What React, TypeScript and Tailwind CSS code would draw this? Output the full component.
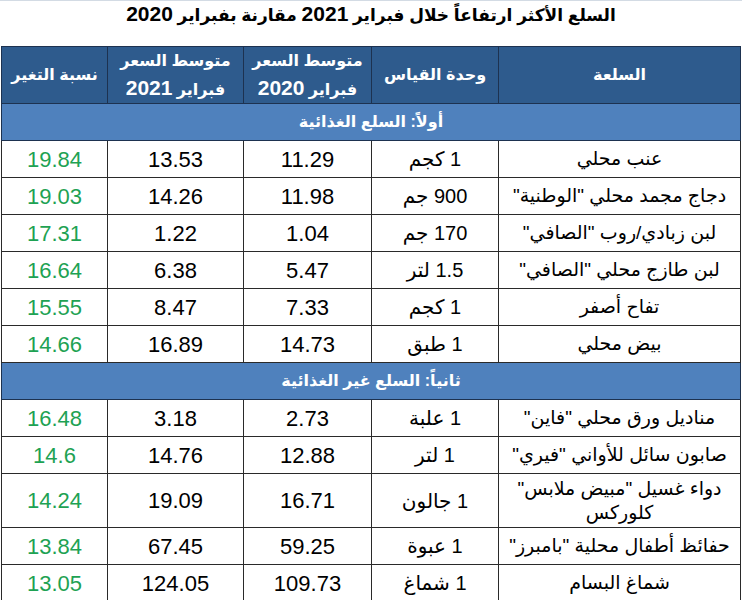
import React from 'react';

type Row = {
  name: string;
  unit: string;
  p2020: string;
  p2021: string;
  change: string;
  tall?: boolean;
};

const food: Row[] = [
  { name: 'عنب محلي', unit: '1 كجم', p2020: '11.29', p2021: '13.53', change: '19.84' },
  { name: 'دجاج مجمد محلي "الوطنية"', unit: '900 جم', p2020: '11.98', p2021: '14.26', change: '19.03' },
  { name: 'لبن زبادي/روب "الصافي"', unit: '170 جم', p2020: '1.04', p2021: '1.22', change: '17.31' },
  { name: 'لبن طازج محلي "الصافي"', unit: '1.5 لتر', p2020: '5.47', p2021: '6.38', change: '16.64' },
  { name: 'تفاح أصفر', unit: '1 كجم', p2020: '7.33', p2021: '8.47', change: '15.55' },
  { name: 'بيض محلي', unit: '1 طبق', p2020: '14.73', p2021: '16.89', change: '14.66' },
];

const nonFood: Row[] = [
  { name: 'مناديل ورق محلي "فاين"', unit: '1 علبة', p2020: '2.73', p2021: '3.18', change: '16.48' },
  { name: 'صابون سائل للأواني "فيري"', unit: '1 لتر', p2020: '12.88', p2021: '14.76', change: '14.6' },
  { name: 'دواء غسيل "مبيض ملابس"\nكلوركس', unit: '1 جالون', p2020: '16.71', p2021: '19.09', change: '14.24', tall: true },
  { name: 'حفائظ أطفال محلية "بامبرز"', unit: '1 عبوة', p2020: '59.25', p2021: '67.45', change: '13.84' },
  { name: 'شماغ البسام', unit: '1 شماغ', p2020: '109.73', p2021: '124.05', change: '13.05' },
];

const font = { fontFamily: '"Liberation Sans", "DejaVu Sans", sans-serif' };

function DataRow({ row }: { row: Row }) {
  return (
    <tr className={row.tall ? 'h-[54px]' : 'h-[37px]'}>
      <td className="border border-[#2a2a2a] px-0 text-center text-[19px] leading-[24px] whitespace-pre-line text-black">
        {row.name}
      </td>
      <td className="border border-[#2a2a2a] text-center text-[20px] whitespace-nowrap text-black">{row.unit}</td>
      <td className="border border-[#2a2a2a] text-center text-[22px] text-black">{row.p2020}</td>
      <td className="border border-[#2a2a2a] text-center text-[22px] text-black">{row.p2021}</td>
      <td className="border border-[#2a2a2a] text-center text-[22px] text-[#1ea253]">{row.change}</td>
    </tr>
  );
}

function SectionRow({ title }: { title: string }) {
  return (
    <tr className="h-[37px]">
      <td colSpan={5} className="border border-[#1d3250] bg-[#4f81bd] text-center text-[16px] font-bold text-white">
        {title}
      </td>
    </tr>
  );
}

function PriceHead({ year }: { year: string }) {
  return (
    <th className="border border-[#1d3250] text-center font-bold leading-[27px] whitespace-nowrap">
      <div className="text-[16px]">متوسط السعر</div>
      <div className="text-[16px]">
        فبراير <span className="text-[21px]">{year}</span>
      </div>
    </th>
  );
}

export default function App() {
  return (
    <div className="w-[742px] h-[600px] bg-white border-t border-[#d3dbe4] overflow-hidden" style={font}>
      <div dir="rtl" className="h-[45px] whitespace-nowrap text-center text-[17px] font-bold leading-[26px] text-black">
        السلع الأكثر ارتفاعاً خلال فبراير <span className="text-[21px]">2021</span> مقارنة بفبراير{' '}
        <span className="text-[21px]">2020</span>
      </div>
      <table dir="rtl" className="ml-[1px] w-[740px] table-fixed border-collapse">
        <colgroup>
          <col className="w-[242px]" />
          <col className="w-[127px]" />
          <col className="w-[128px]" />
          <col className="w-[136px]" />
          <col className="w-[106px]" />
        </colgroup>
        <thead>
          <tr className="h-[54px] bg-[#2e5b8d] text-white">
            <th className="border border-[#1d3250] text-center text-[16px] font-bold">السلعة</th>
            <th className="border border-[#1d3250] text-center text-[16px] font-bold whitespace-nowrap">وحدة القياس</th>
            <PriceHead year="2020" />
            <PriceHead year="2021" />
            <th className="border border-[#1d3250] text-center text-[16px] font-bold whitespace-nowrap">نسبة التغير</th>
          </tr>
        </thead>
        <tbody>
          <SectionRow title="أولاً: السلع الغذائية" />
          {food.map((r) => (
            <DataRow key={r.name} row={r} />
          ))}
          <SectionRow title="ثانياً: السلع غير الغذائية" />
          {nonFood.map((r) => (
            <DataRow key={r.name} row={r} />
          ))}
        </tbody>
      </table>
    </div>
  );
}
